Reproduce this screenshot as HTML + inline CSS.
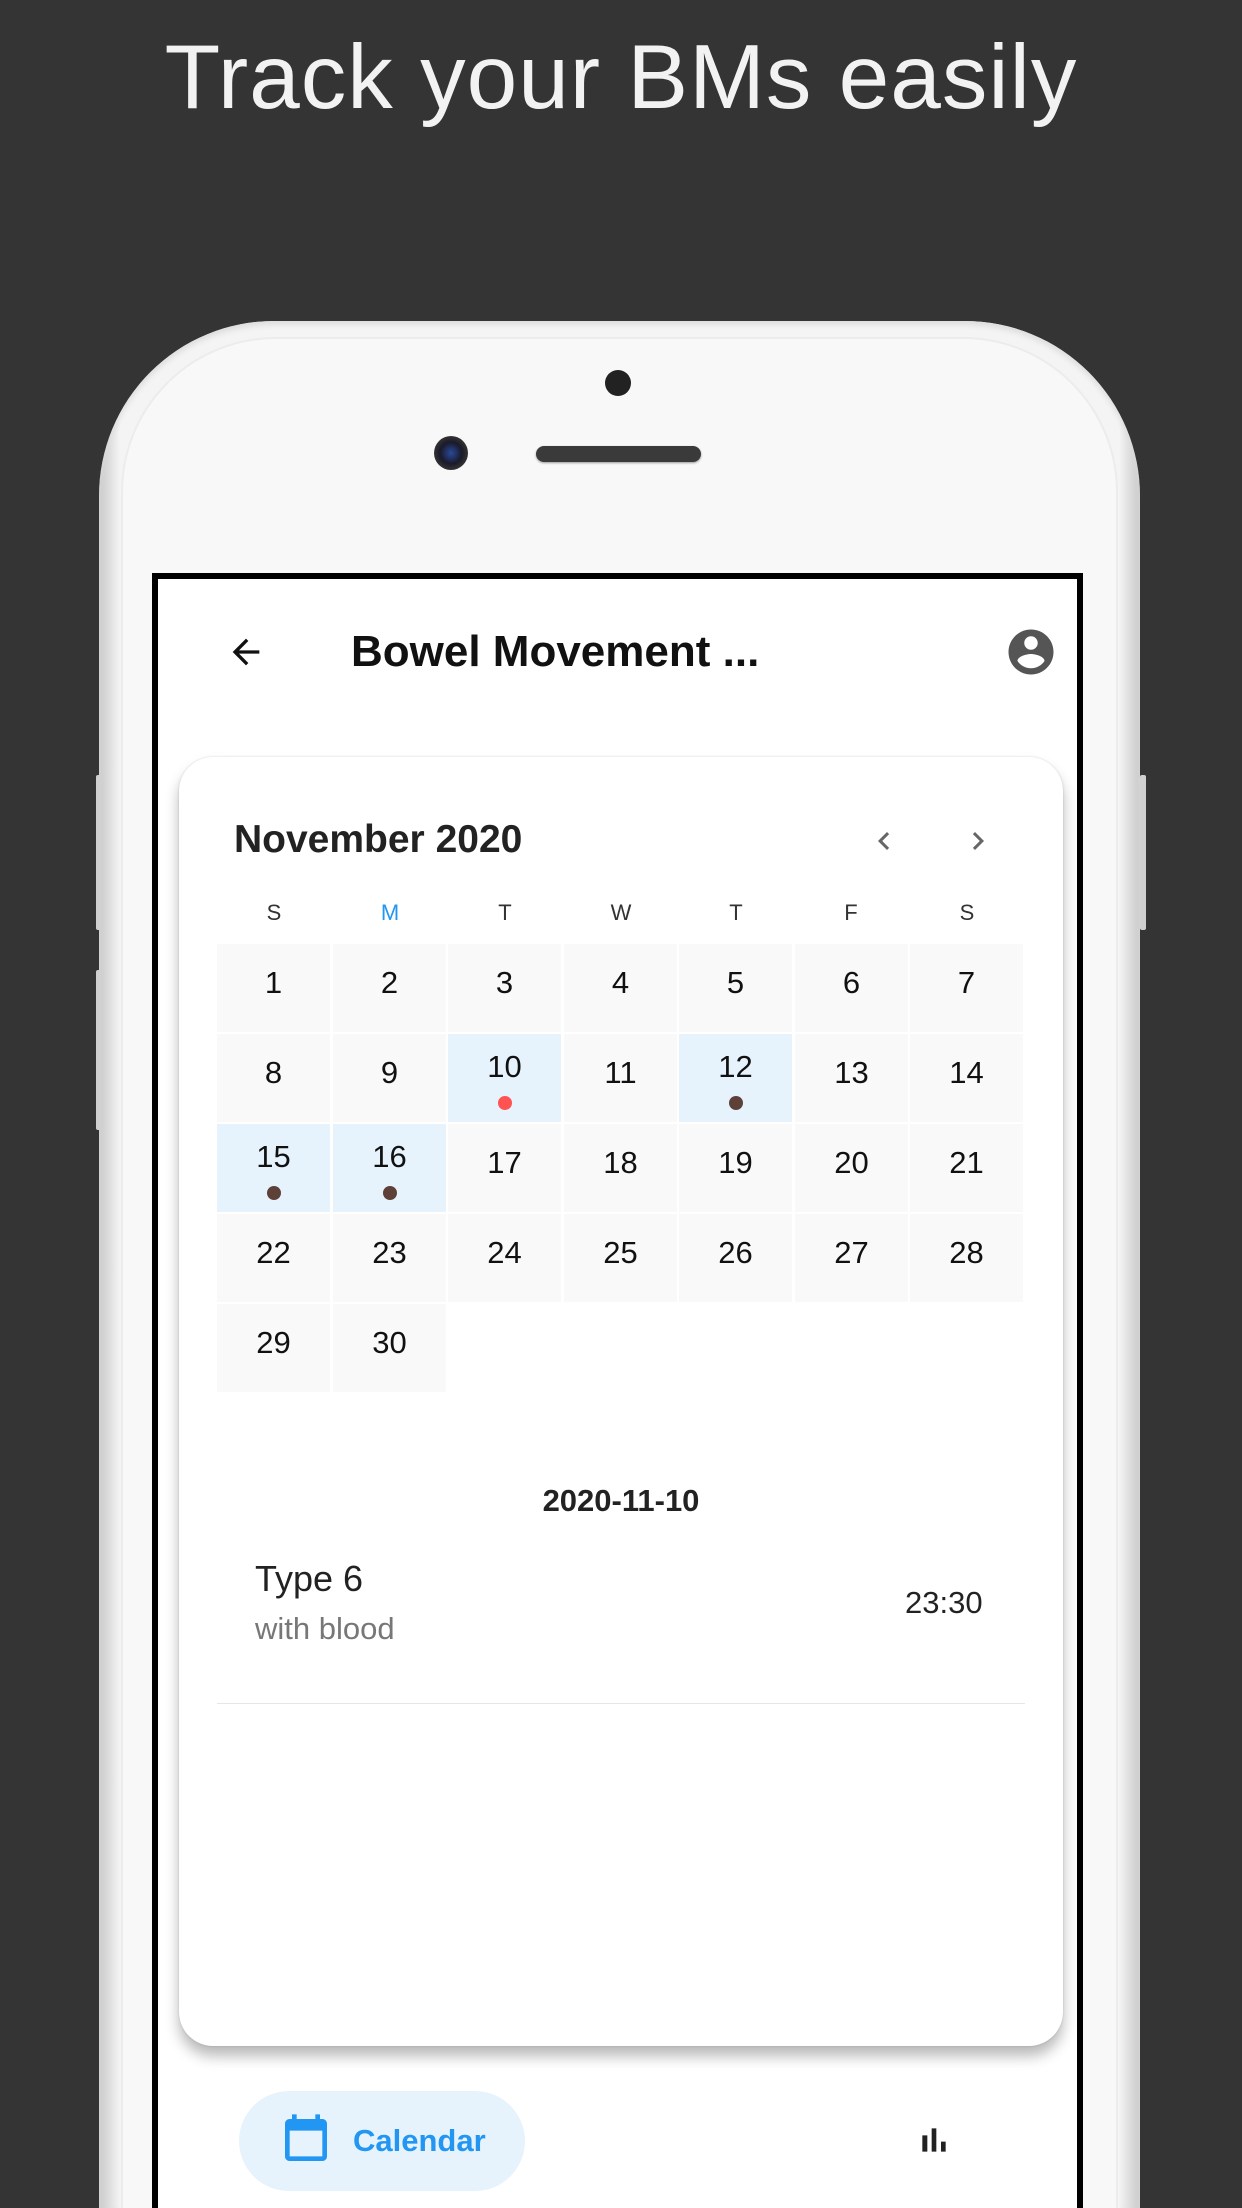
<!DOCTYPE html>
<html><head><meta charset="utf-8"><style>
*{margin:0;padding:0;box-sizing:border-box}
html{width:1242px;height:2208px;overflow:hidden}
body{width:1242px;height:2208px;background:#343434;position:relative;overflow:hidden;font-family:"Liberation Sans",sans-serif}
.title{position:absolute;top:26px;left:0;width:1242px;text-align:center;color:#f2f2f2;font-size:91px;font-weight:300;letter-spacing:1px}
.phone{position:absolute;left:99px;top:321px;width:1041px;height:1887px;border-radius:175px 175px 0 0;background:linear-gradient(90deg,#c8c8c8,#f4f4f4 2%,#f4f4f4 98%,#c8c8c8);box-shadow:inset 0 4px 6px #ddd;overflow:hidden}
.face{position:absolute;left:22px;top:16px;right:22px;bottom:-40px;border-radius:155px 155px 0 0;background:#f8f8f8;border:2px solid #ececec}
.btn{position:absolute;background:#d0d0d0;width:6px;border-radius:2px}
.screen{position:absolute;left:152px;top:573px;width:931px;height:1660px;border:6px solid #000;background:#fff}
.abs{position:absolute}
.card{position:absolute;left:179px;top:757px;width:884px;height:1289px;border-radius:34px;background:#fff;box-shadow:0 10px 14px rgba(0,0,0,.28),0 0 2px rgba(0,0,0,.15)}
.cell{position:absolute;width:113px;height:88px;background:#f9f9f9;text-align:center;font-size:31px;color:#111;line-height:78px}
.cell.h{background:#e6f3fd;line-height:66px}
.dot{position:absolute;left:50px;top:62px;width:14px;height:14px;border-radius:50%;background:#5d4037}
.wd{position:absolute;top:900px;width:116px;text-align:center;font-size:22px;color:#333}
</style></head><body>
<div class="title">Track your BMs easily</div>
<div class="btn" style="left:96px;top:775px;height:155px"></div>
<div class="btn" style="left:96px;top:970px;height:160px"></div>
<div class="btn" style="left:1140px;top:775px;height:155px"></div>
<div class="phone"><div class="face"></div></div>
<div class="abs" style="left:605px;top:370px;width:26px;height:26px;border-radius:50%;background:#222"></div>
<div class="abs" style="left:434px;top:436px;width:34px;height:34px;border-radius:50%;background:radial-gradient(circle,#2a4a9a 0,#1a1a2a 45%,#333 70%,#999 100%)"></div>
<div class="abs" style="left:536px;top:446px;width:165px;height:16px;border-radius:8px;background:#3a3a3a;box-shadow:0 1px 2px #999"></div>
<div class="screen"></div>
<svg class="abs" style="left:226px;top:632px" width="40" height="40" viewBox="0 0 24 24"><path d="M20 11H7.83l5.59-5.59L12 4l-8 8 8 8 1.41-1.41L7.83 13H20v-2z" fill="#111"/></svg>
<div class="abs" style="left:351px;top:627px;font-size:44px;font-weight:bold;color:#111">Bowel Movement ...</div>
<svg class="abs" style="left:1004px;top:625px" width="54" height="54" viewBox="0 0 24 24"><path fill="#555" d="M12 2C6.48 2 2 6.48 2 12s4.48 10 10 10 10-4.48 10-10S17.52 2 12 2zm0 3c1.66 0 3 1.34 3 3s-1.34 3-3 3-3-1.34-3-3 1.34-3 3-3zm0 14.2c-2.5 0-4.71-1.28-6-3.22.03-1.99 4-3.08 6-3.08 1.99 0 5.97 1.09 6 3.08-1.29 1.94-3.5 3.22-6 3.22z"/></svg>
<div class="card"></div>
<div class="abs" style="left:234px;top:818px;font-size:39px;font-weight:bold;color:#222">November 2020</div>
<svg class="abs" style="left:866px;top:823px" width="36" height="36" viewBox="0 0 24 24"><path d="M15.41 7.41L14 6l-6 6 6 6 1.41-1.41L10.83 12z" fill="#666"/></svg>
<svg class="abs" style="left:960px;top:823px" width="36" height="36" viewBox="0 0 24 24"><path d="M10 6L8.59 7.41 13.17 12l-4.58 4.59L10 18l6-6z" fill="#666"/></svg>
<div class="wd" style="left:216px">S</div><div class="wd" style="left:332px;color:#2196f3">M</div><div class="wd" style="left:447px">T</div><div class="wd" style="left:563px">W</div><div class="wd" style="left:678px">T</div><div class="wd" style="left:793px">F</div><div class="wd" style="left:909px">S</div>
<div class="cell" style="left:217px;top:944px">1</div><div class="cell" style="left:333px;top:944px">2</div><div class="cell" style="left:448px;top:944px">3</div><div class="cell" style="left:564px;top:944px">4</div><div class="cell" style="left:679px;top:944px">5</div><div class="cell" style="left:795px;top:944px">6</div><div class="cell" style="left:910px;top:944px">7</div>
<div class="cell" style="left:217px;top:1034px">8</div><div class="cell" style="left:333px;top:1034px">9</div><div class="cell h" style="left:448px;top:1034px">10<div class="dot" style="background:#ff5252"></div></div><div class="cell" style="left:564px;top:1034px">11</div><div class="cell h" style="left:679px;top:1034px">12<div class="dot"></div></div><div class="cell" style="left:795px;top:1034px">13</div><div class="cell" style="left:910px;top:1034px">14</div>
<div class="cell h" style="left:217px;top:1124px">15<div class="dot"></div></div><div class="cell h" style="left:333px;top:1124px">16<div class="dot"></div></div><div class="cell" style="left:448px;top:1124px">17</div><div class="cell" style="left:564px;top:1124px">18</div><div class="cell" style="left:679px;top:1124px">19</div><div class="cell" style="left:795px;top:1124px">20</div><div class="cell" style="left:910px;top:1124px">21</div>
<div class="cell" style="left:217px;top:1214px">22</div><div class="cell" style="left:333px;top:1214px">23</div><div class="cell" style="left:448px;top:1214px">24</div><div class="cell" style="left:564px;top:1214px">25</div><div class="cell" style="left:679px;top:1214px">26</div><div class="cell" style="left:795px;top:1214px">27</div><div class="cell" style="left:910px;top:1214px">28</div>
<div class="cell" style="left:217px;top:1304px">29</div><div class="cell" style="left:333px;top:1304px">30</div>
<div class="abs" style="left:0;width:1242px;top:1483px;text-align:center;font-size:31px;font-weight:bold;color:#222">2020-11-10</div>
<div class="abs" style="left:255px;top:1558px;font-size:36px;color:#222">Type 6</div>
<div class="abs" style="left:255px;top:1611px;font-size:31px;color:#777">with blood</div>
<div class="abs" style="left:905px;top:1585px;font-size:31px;color:#222">23:30</div>
<div class="abs" style="left:217px;top:1703px;width:808px;height:1px;background:#e6e6e6"></div>
<div class="abs" style="left:239px;top:2091px;width:286px;height:100px;border-radius:50px;background:#e6f3fd"></div>
<svg class="abs" style="left:278px;top:2112px" width="56" height="56" viewBox="0 0 24 24"><path fill="#2196f3" d="M19 3h-1V1h-2v2H8V1H6v2H5c-1.11 0-2 .9-2 2v14c0 1.1.89 2 2 2h14c1.1 0 2-.9 2-2V5c0-1.1-.9-2-2-2zm0 16H5V8h14v11z"/></svg>
<div class="abs" style="left:353px;top:2123px;font-size:31px;font-weight:bold;color:#2196f3">Calendar</div>
<svg class="abs" style="left:914px;top:2120px" width="40" height="40" viewBox="0 0 24 24"><path fill="#222" d="M5 9.2h3V19H5zM10.6 5h2.8v14h-2.8zm5.6 8H19v6h-2.8z"/></svg>
</body></html>
